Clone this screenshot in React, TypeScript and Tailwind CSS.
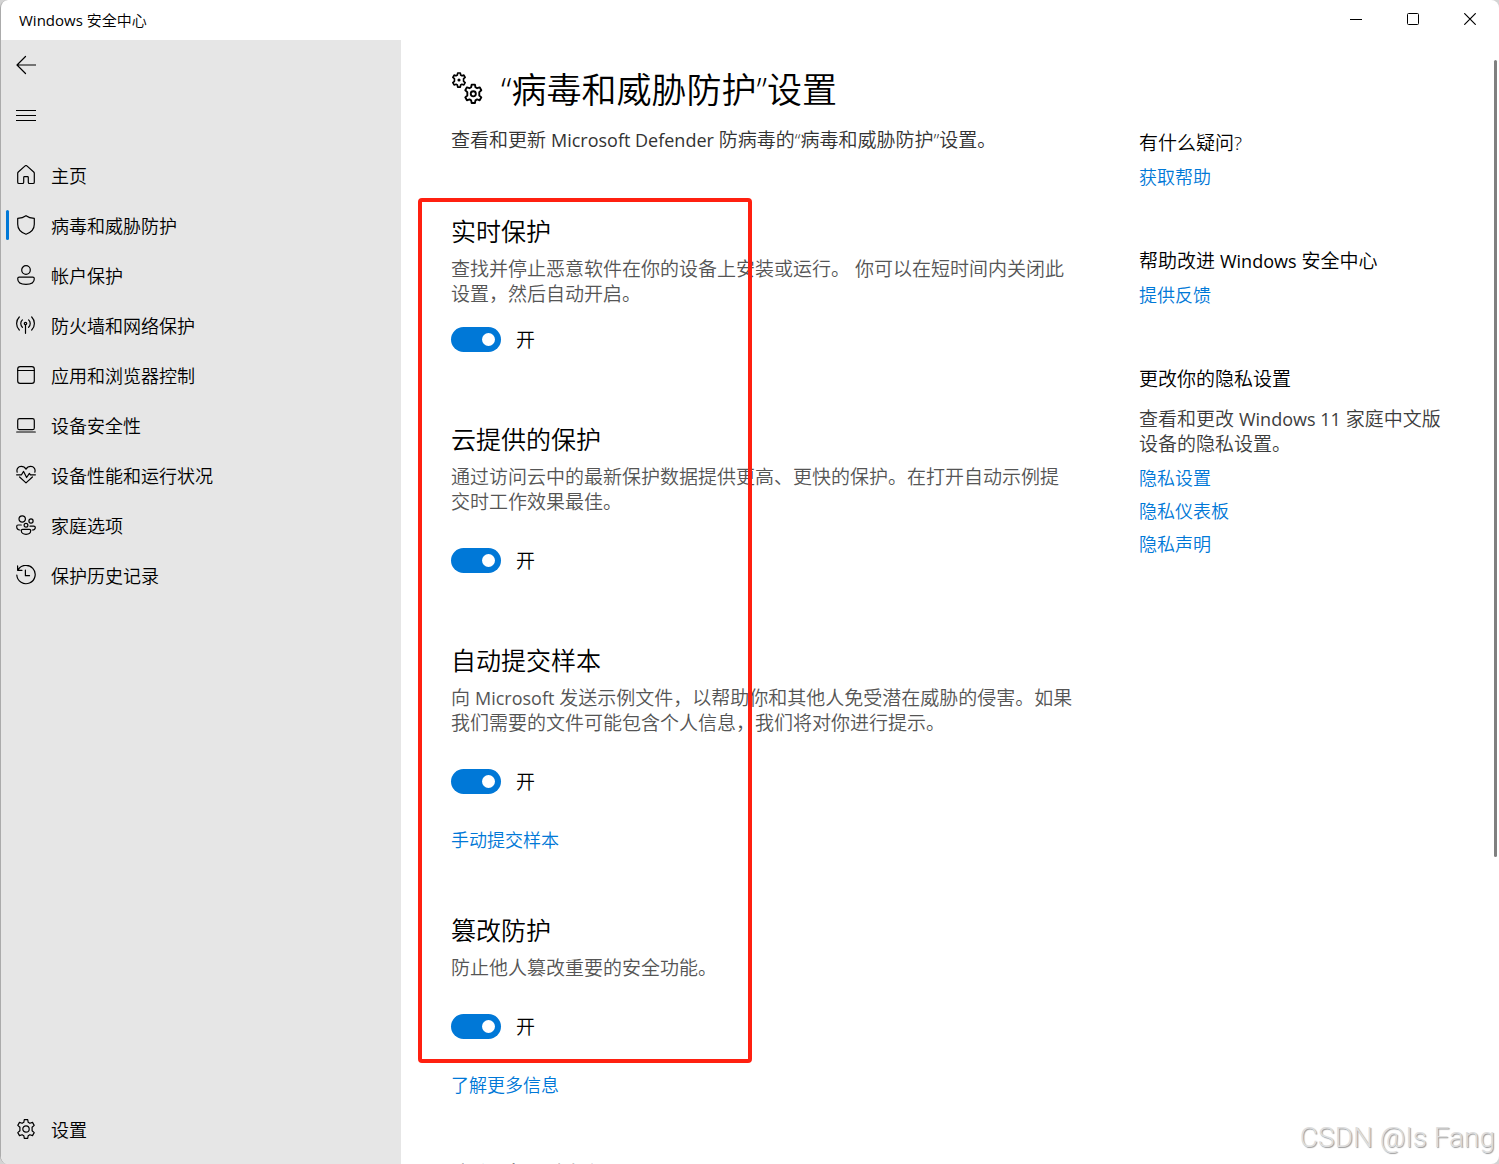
import type { ReactNode } from "react";

// Line icons share a 20x20 box and inherit the text colour
const Icon = ({ children }: { children: ReactNode }) => (
  <svg
    viewBox="0 0 20 20"
    className="w-5 h-5 shrink-0"
    fill="none"
    stroke="currentColor"
    strokeWidth="1.2"
    strokeLinecap="round"
    strokeLinejoin="round"
    aria-hidden="true"
  >
    {children}
  </svg>
);

const GEAR =
  "M8.3 0.6h3.4l0.5 2.7 1.7 1 2.6-0.9 1.7 3-2.1 1.9v3.4l2.1 1.9-1.7 3-2.6-0.9-1.7 1-0.5 2.7H8.3l-0.5-2.7-1.7-1-2.6 0.9-1.7-3 2.1-1.9V8.3l-2.1-1.9 1.7-3 2.6 0.9 1.7-1z";

const navItems = [
  {
    label: "主页",
    icon: (
      <path d="M1.7 8.3Q1.7 7.6 2.3 7L9.1 0.9Q10 0.2 10.9 0.9L17.7 7Q18.3 7.6 18.3 8.3V17.2Q18.3 18.5 17 18.5H13.5Q12.3 18.5 12.3 17.2V12.5Q12.3 11.7 11.5 11.7H8.5Q7.7 11.7 7.7 12.5V17.2Q7.7 18.5 6.5 18.5H3Q1.7 18.5 1.7 17.2Z" />
    ),
  },
  {
    label: "病毒和威胁防护",
    active: true,
    icon: (
      <path d="M10 0.7C12.3 2.4 15 3.2 18.3 3.4V9.3C18.3 14.2 15.3 17.4 10 19.3C4.7 17.4 1.7 14.2 1.7 9.3V3.4C5 3.2 7.7 2.4 10 0.7Z" />
    ),
  },
  {
    label: "帐户保护",
    icon: (
      <>
        <circle cx="10" cy="5" r="4.3" />
        <path d="M3.2 12.2H16.8Q18.3 12.2 18.3 13.7C18.3 17.2 15 19.3 10 19.3S1.7 17.2 1.7 13.7Q1.7 12.2 3.2 12.2Z" />
      </>
    ),
  },
  {
    label: "防火墙和网络保护",
    icon: (
      <>
        <circle cx="9.5" cy="8.5" r="1.2" />
        <path d="M9.5 9.8V18.3M6.4 4.9A5 5 0 0 0 6.4 12.3M12.6 4.9A5 5 0 0 1 12.6 12.3M3.3 2A9.2 9.2 0 0 0 3.3 15M15.7 2A9.2 9.2 0 0 1 15.7 15" />
      </>
    ),
  },
  {
    label: "应用和浏览器控制",
    icon: (
      <>
        <rect x="1.7" y="1.7" width="16.6" height="16.6" rx="2.4" />
        <path d="M1.7 5.5H18.3" />
      </>
    ),
  },
  {
    label: "设备安全性",
    icon: (
      <>
        <rect x="1.7" y="3.7" width="16.6" height="11" rx="1.8" />
        <path d="M0.7 17H19.3" />
      </>
    ),
  },
  {
    label: "设备性能和运行状况",
    icon: (
      <>
        <path d="M0.6 9.8H5.5L7.6 6.4L10.6 12.5L13.4 8.4L14.4 9.8H19.4" />
        <path d="M1.2 7.2C0.2 4 2.3 1.4 5.2 1.4C7.4 1.4 9 2.4 10 4.2C11 2.4 12.6 1.4 14.8 1.4C17.7 1.4 19.8 4 18.8 7.2M3.6 12L10 17.9L16.4 12" />
      </>
    ),
  },
  {
    label: "家庭选项",
    icon: (
      <>
        <circle cx="6.2" cy="4" r="3.2" />
        <circle cx="15" cy="6" r="2.1" />
        <circle cx="10" cy="10.3" r="1.9" />
        <path d="M5.3 10H2Q0.7 10 0.7 11.4C0.7 13.6 2 14.8 3.9 15M14 11.2H17.8Q19.3 11.2 19.3 12.5C19.3 14.2 18 15 16.3 15M6.6 14.3H13.4Q14.7 14.3 14.7 15.5C14.7 18 12.6 19.3 10 19.3S5.3 18 5.3 15.5Q5.3 14.3 6.6 14.3Z" />
      </>
    ),
  },
  {
    label: "保护历史记录",
    icon: (
      <>
        <path d="M1.6 0.9V5.3H6M1.9 5.1A9.2 9.2 0 1 1 0.8 10" />
        <path d="M9.4 5V10.7H13.5" />
      </>
    ),
  },
];

// Latin words run a size smaller and a little heavier than the Chinese around them
const Latin = ({ children }: { children: ReactNode }) => (
  <span className="text-lg leading-[25px] font-normal">{children}</span>
);

const Toggle = ({ id, heading }: { id: string; heading: string }) => (
  <div className="flex items-center gap-[15px] h-[25px]">
    <input
      id={id}
      type="checkbox"
      role="switch"
      defaultChecked
      aria-describedby={heading}
      className="relative appearance-none w-[50px] h-[25px] rounded-full bg-gray-400 checked:bg-[#0078d7] before:absolute before:top-1.5 before:left-1.5 before:size-[13px] before:rounded-full before:bg-white checked:before:left-auto checked:before:right-1.5"
    />
    <label htmlFor={id} className="pt-0.5 text-[19px] leading-[25px]">
      开
    </label>
  </div>
);

const TextLink = ({ children }: { children: ReactNode }) => (
  <a href="#" className="block w-fit text-lg leading-[25px] text-[#0078d7] hover:underline">
    {children}
  </a>
);

const sections = [
  {
    id: "realtime",
    title: "实时保护",
    text: "查找并停止恶意软件在你的设备上安装或运行。 你可以在短时间内关闭此设置，然后自动开启。",
    toggleGap: "mt-5",
  },
  {
    id: "cloud",
    title: "云提供的保护",
    text: "通过访问云中的最新保护数据提供更高、更快的保护。在打开自动示例提交时工作效果最佳。",
    toggleGap: "mt-[33px]",
  },
  {
    id: "samples",
    title: "自动提交样本",
    text: (
      <>
        向 <Latin>Microsoft</Latin> 发送示例文件，以帮助你和其他人免受潜在威胁的侵害。如果我们需要的文件可能包含个人信息，我们将对你进行提示。
      </>
    ),
    toggleGap: "mt-[33px]",
    link: "手动提交样本",
  },
  {
    id: "tamper",
    title: "篡改防护",
    text: "防止他人篡改重要的安全功能。",
    toggleGap: "mt-[33px]",
    link: "了解更多信息",
  },
];

const Sidebar = () => (
  <aside className="flex flex-col w-[400px] shrink-0 bg-[#e6e6e6] pb-2.5">
    <button aria-label="返回" className="flex items-center h-[50px] pl-[15px]">
      <Icon>
        <path d="M9.5 1.5L1 10L9.5 18.5M1 10H19.7" />
      </Icon>
    </button>
    <button aria-label="菜单" className="flex items-center h-[50px] pl-[15px]">
      <Icon>
        <path d="M0 5.5H20M0 10.5H20M0 15.5H20" strokeWidth="1" strokeLinecap="butt" />
      </Icon>
    </button>
    <nav className="mt-2.5">
      {navItems.map((item) => (
        <a key={item.label} href="#" className="relative flex items-center gap-[15px] h-[50px] pl-[15px]">
          {item.active && <span className="absolute left-[5px] top-2.5 w-[3px] h-[30px] rounded-full bg-[#0078d7]" />}
          <Icon>{item.icon}</Icon>
          <span className="pt-0.5 text-lg leading-[25px]">{item.label}</span>
        </a>
      ))}
    </nav>
    <a href="#" className="mt-auto flex items-center gap-[15px] h-[50px] pl-[15px]">
      <Icon>
        <path d={GEAR} />
        <circle cx="10" cy="10" r="3.2" />
      </Icon>
      <span className="pt-0.5 text-lg leading-[25px]">设置</span>
    </a>
  </aside>
);

const HelpColumn = () => (
  <aside className="w-[305px] pt-[66px] text-[19px] leading-[25px]">
    <h2>有什么疑问?</h2>
    <div className="mt-[9px]">
      <TextLink>获取帮助</TextLink>
    </div>
    <h2 className="mt-[59px]">
      帮助改进 <Latin>Windows</Latin> 安全中心
    </h2>
    <div className="mt-[9px]">
      <TextLink>提供反馈</TextLink>
    </div>
    <h2 className="mt-[59px]">更改你的隐私设置</h2>
    <p className="mt-[15px] text-[#3d3d3d]">
      查看和更改 <Latin>Windows 11</Latin> 家庭中文版设备的隐私设置。
    </p>
    <div className="mt-[9px] flex flex-col gap-2">
      <TextLink>隐私设置</TextLink>
      <TextLink>隐私仪表板</TextLink>
      <TextLink>隐私声明</TextLink>
    </div>
  </aside>
);

export default function App() {
  return (
    <div className="h-screen bg-[#d4d4d4] font-['Open_Sans','Noto_Sans_CJK_SC',sans-serif] font-[350] text-black">
      <div className="relative flex flex-col h-full overflow-hidden rounded-lg border-l border-[#ababab] bg-white">
        {/* Title bar */}
        <header className="flex items-center justify-between h-10 shrink-0 pl-[18px] pr-px">
          <span className="text-[15px] leading-5">
            <span className="font-normal">Windows</span> 安全中心
          </span>
          <div className="flex self-start">
            <button aria-label="最小化" className="flex items-center justify-center w-[57px] h-[38px]">
              <svg viewBox="0 0 12 12" className="size-3" stroke="currentColor" fill="none">
                <path d="M0 6.5H12" />
              </svg>
            </button>
            <button aria-label="最大化" className="flex items-center justify-center w-[57px] h-[38px]">
              <svg viewBox="0 0 12 12" className="size-3" stroke="currentColor" fill="none">
                <rect x="0.5" y="0.5" width="11" height="11" rx="1" />
              </svg>
            </button>
            <button aria-label="关闭" className="flex items-center justify-center w-[57px] h-[38px]">
              <svg viewBox="0 0 12 12" className="size-3" stroke="currentColor" fill="none">
                <path d="M0.3 0.3L11.7 11.7M11.7 0.3L0.3 11.7" strokeWidth="1.2" />
              </svg>
            </button>
          </div>
        </header>

        <div className="flex flex-1 min-h-0">
          <Sidebar />

          <main className="relative flex flex-1 min-w-0 gap-[63px] overflow-hidden pl-[50px] pt-[25px]">
            <div className="w-[625px] shrink-0">
              <h1 className="flex items-center gap-[17px] text-[35px] leading-[50px] whitespace-nowrap">
                <svg
                  viewBox="0 0 33 36"
                  className="w-[33px] h-9"
                  fill="none"
                  stroke="currentColor"
                  strokeLinejoin="round"
                  aria-hidden="true"
                >
                  <g transform="translate(0.5 0.5) scale(0.75)" strokeWidth="2.2">
                    <path d={GEAR} />
                    <circle cx="10" cy="10" r="1" />
                  </g>
                  <g transform="translate(12.5 12) scale(0.98)" strokeWidth="1.9">
                    <path d={GEAR} />
                    <circle cx="10" cy="10" r="2.6" />
                  </g>
                </svg>
                “病毒和威胁防护”设置
              </h1>
              <p className="mt-[13px] text-[19px] leading-[25px] text-[#333333]">
                查看和更新 <Latin>Microsoft Defender</Latin> 防病毒的“病毒和威胁防护”设置。
              </p>

              <div className="relative mt-[63px]">
                <div className="flex flex-col gap-[72px]">
                  {sections.map((section) => (
                    <section key={section.id}>
                      <h2 id={section.id + "-title"} className="text-[25px] leading-[30px]">
                        {section.title}
                      </h2>
                      <p className="mt-[11px] text-[19px] leading-[25px] text-[#555555]">{section.text}</p>
                      <div className={section.toggleGap}>
                        <Toggle id={section.id} heading={section.id + "-title"} />
                      </div>
                      {section.link && (
                        <div className="mt-[34px] -mb-2.5">
                          <TextLink>{section.link}</TextLink>
                        </div>
                      )}
                    </section>
                  ))}
                </div>
                {/* Red highlight frame */}
                <div className="pointer-events-none absolute -left-[33px] -top-[18px] bottom-[25px] w-[334px] rounded border-4 border-[#ff2010]" />
              </div>

              <h2 className="mt-[72px] text-[25px] leading-[30px]">文件夹限制访问</h2>
            </div>

            <HelpColumn />

            {/* Scroll thumb */}
            <div className="absolute right-0.5 top-5 w-[3px] h-[73%] max-h-[797px] rounded-full bg-[#808080]" />
          </main>
        </div>

        {/* Watermark */}
        <div className="pointer-events-none absolute right-1 bottom-2 font-['Roboto',sans-serif] text-[28px] leading-9 text-[#dedede] [text-shadow:1px_1px_1px_#9a9a9a]">
          CSDN @Is Fang
        </div>
      </div>
    </div>
  );
}
